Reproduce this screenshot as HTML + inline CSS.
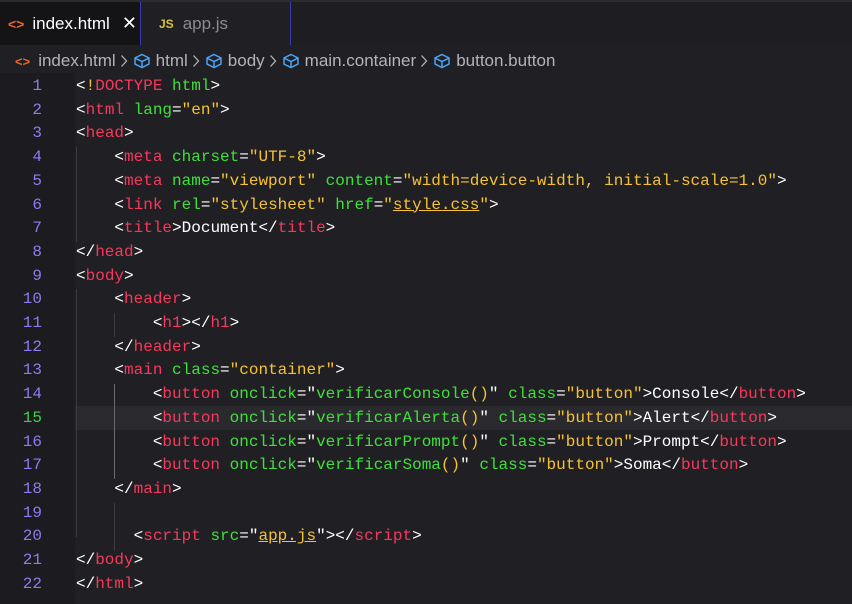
<!DOCTYPE html>
<html><head><style>
body{margin:0;width:852px;height:604px;background:#202024;overflow:hidden;font-family:"Liberation Sans",sans-serif;position:relative}
.top{position:absolute;left:0;top:0;width:852px;height:2px;background:#2b2b30}
.tabs{position:absolute;top:2px;left:0;width:852px;height:43px;background:#1e1e22}
.tab{position:absolute;top:0;height:43px;display:flex;align-items:center;font-size:16px}
.t1{left:0;width:140px;background:#141417;color:#fff}
.t2{left:141px;width:149px;background:#202024;color:#8a8a8f}
.sep{position:absolute;top:2px;width:1px;height:43px;background:#3a3ab0}
.bc{position:absolute;top:47px;left:0;width:852px;height:28px;color:#b4b4b8;font-size:17px;display:flex;align-items:center}
.bc svg{flex:none}
.ch{margin:0 5px 0 4px}
.ic{margin-right:5px}
.gut{position:absolute;left:0;top:73px;width:75px;height:531px;background:#1c1c20}
.code{position:absolute;left:0;top:75px;font-family:"Liberation Mono",monospace;font-size:16px;line-height:23.71px;white-space:pre;color:#fff}
.ln{display:inline-block;width:42px;text-align:right;color:#8b7cf0;margin-right:34px}
.cur{position:absolute;left:75px;top:406px;width:777px;height:24px;background:#29292e}
.g{position:absolute;width:1px;background:#3c3c40}
.t{color:#f7385d}.a{color:#3fe03a}.s{color:#f6c232}.p{color:#fff}.u{text-decoration:underline;text-decoration-color:#f6c232}
</style></head><body>
<div class="top"></div>
<div class="tabs">
<div class="tab t1"><span style="color:#e8642b;font-weight:bold;margin-left:8px;font-size:14px">&lt;&gt;</span><span style="margin-left:8px;font-size:17px">index.html</span><span style="margin-left:12px;font-size:18px">✕</span></div>
<div class="tab t2"><span style="color:#d6c239;font-weight:bold;font-size:12px;margin-left:18px">JS</span><span style="margin-left:9px;font-size:17px">app.js</span></div>
</div>
<div class="sep" style="left:140px"></div><div class="sep" style="left:290px"></div>
<div class="bc"><span style="color:#e8642b;font-weight:bold;margin-left:15px;font-size:13px">&lt;&gt;</span><span style="margin-left:8px">index.html</span>
<svg class="ch" width="8" height="14" viewBox="0 0 8 14"><path d="M1.5 1.5 6.5 7l-5 5.5" fill="none" stroke="#b4b4b8" stroke-width="1.3"/></svg><svg class="ic" width="18" height="16" viewBox="0 0 18 16"><path d="M9 1.5 16 5v6l-7 3.5L2 11V5z M2.5 5.3 9 8.5l6.5-3.2 M9 8.5v5" fill="none" stroke="#4ba3f5" stroke-width="1.5"/></svg><span>html</span>
<svg class="ch" width="8" height="14" viewBox="0 0 8 14"><path d="M1.5 1.5 6.5 7l-5 5.5" fill="none" stroke="#b4b4b8" stroke-width="1.3"/></svg><svg class="ic" width="18" height="16" viewBox="0 0 18 16"><path d="M9 1.5 16 5v6l-7 3.5L2 11V5z M2.5 5.3 9 8.5l6.5-3.2 M9 8.5v5" fill="none" stroke="#4ba3f5" stroke-width="1.5"/></svg><span>body</span>
<svg class="ch" width="8" height="14" viewBox="0 0 8 14"><path d="M1.5 1.5 6.5 7l-5 5.5" fill="none" stroke="#b4b4b8" stroke-width="1.3"/></svg><svg class="ic" width="18" height="16" viewBox="0 0 18 16"><path d="M9 1.5 16 5v6l-7 3.5L2 11V5z M2.5 5.3 9 8.5l6.5-3.2 M9 8.5v5" fill="none" stroke="#4ba3f5" stroke-width="1.5"/></svg><span>main.container</span>
<svg class="ch" width="8" height="14" viewBox="0 0 8 14"><path d="M1.5 1.5 6.5 7l-5 5.5" fill="none" stroke="#b4b4b8" stroke-width="1.3"/></svg><svg class="ic" width="18" height="16" viewBox="0 0 18 16"><path d="M9 1.5 16 5v6l-7 3.5L2 11V5z M2.5 5.3 9 8.5l6.5-3.2 M9 8.5v5" fill="none" stroke="#4ba3f5" stroke-width="1.5"/></svg><span>button.button</span></div>
<div class="gut"></div>
<div class="cur"></div>
<div class="g" style="left:76px;top:147px;height:95px"></div>
<div class="g" style="left:76px;top:289px;height:248px"></div>
<div class="g" style="left:114px;top:313px;height:24px"></div>
<div class="g" style="left:114px;top:384px;height:95px;background:#6a6a70"></div>
<div class="g" style="left:114px;top:503px;height:48px"></div>
<div class="code"><span class="ln">1</span><span class="p">&lt;</span><span class="s">!</span><span class="t">DOCTYPE</span> <span class="a">html</span><span class="p">&gt;</span>
<span class="ln">2</span>&lt;<span class="t">html</span> <span class="a">lang</span>=<span class="s">"en"</span>&gt;
<span class="ln">3</span>&lt;<span class="t">head</span>&gt;
<span class="ln">4</span>    &lt;<span class="t">meta</span> <span class="a">charset</span>=<span class="s">"UTF-8"</span>&gt;
<span class="ln">5</span>    &lt;<span class="t">meta</span> <span class="a">name</span>=<span class="s">"viewport"</span> <span class="a">content</span>=<span class="s">"width=device-width, initial-scale=1.0"</span>&gt;
<span class="ln">6</span>    &lt;<span class="t">link</span> <span class="a">rel</span>=<span class="s">"stylesheet"</span> <span class="a">href</span>=<span class="s">"<span class="u">style.css</span>"</span>&gt;
<span class="ln">7</span>    &lt;<span class="t">title</span>&gt;Document&lt;/<span class="t">title</span>&gt;
<span class="ln">8</span>&lt;/<span class="t">head</span>&gt;
<span class="ln">9</span>&lt;<span class="t">body</span>&gt;
<span class="ln">10</span>    &lt;<span class="t">header</span>&gt;
<span class="ln">11</span>        &lt;<span class="t">h1</span>&gt;&lt;/<span class="t">h1</span>&gt;
<span class="ln">12</span>    &lt;/<span class="t">header</span>&gt;
<span class="ln">13</span>    &lt;<span class="t">main</span> <span class="a">class</span>=<span class="s">"container"</span>&gt;
<span class="ln">14</span>        &lt;<span class="t">button</span> <span class="a">onclick</span>=<span class="p">"</span><span class="a">verificarConsole</span><span class="s">()</span><span class="p">"</span> <span class="a">class</span>=<span class="s">"button"</span>&gt;Console&lt;/<span class="t">button</span>&gt;
<span class="ln" style="color:#3fd04a">15</span>        &lt;<span class="t">button</span> <span class="a">onclick</span>=<span class="p">"</span><span class="a">verificarAlerta</span><span class="s">()</span><span class="p">"</span> <span class="a">class</span>=<span class="s">"button"</span>&gt;Alert&lt;/<span class="t">button</span>&gt;
<span class="ln">16</span>        &lt;<span class="t">button</span> <span class="a">onclick</span>=<span class="p">"</span><span class="a">verificarPrompt</span><span class="s">()</span><span class="p">"</span> <span class="a">class</span>=<span class="s">"button"</span>&gt;Prompt&lt;/<span class="t">button</span>&gt;
<span class="ln">17</span>        &lt;<span class="t">button</span> <span class="a">onclick</span>=<span class="p">"</span><span class="a">verificarSoma</span><span class="s">()</span><span class="p">"</span> <span class="a">class</span>=<span class="s">"button"</span>&gt;Soma&lt;/<span class="t">button</span>&gt;
<span class="ln">18</span>    &lt;/<span class="t">main</span>&gt;
<span class="ln">19</span>
<span class="ln">20</span>      &lt;<span class="t">script</span> <span class="a">src</span>=<span class="p">"</span><span class="s u">app.js</span><span class="p">"</span>&gt;&lt;/<span class="t">script</span>&gt;
<span class="ln">21</span>&lt;/<span class="t">body</span>&gt;
<span class="ln">22</span>&lt;/<span class="t">html</span>&gt;</div>
</body></html>
